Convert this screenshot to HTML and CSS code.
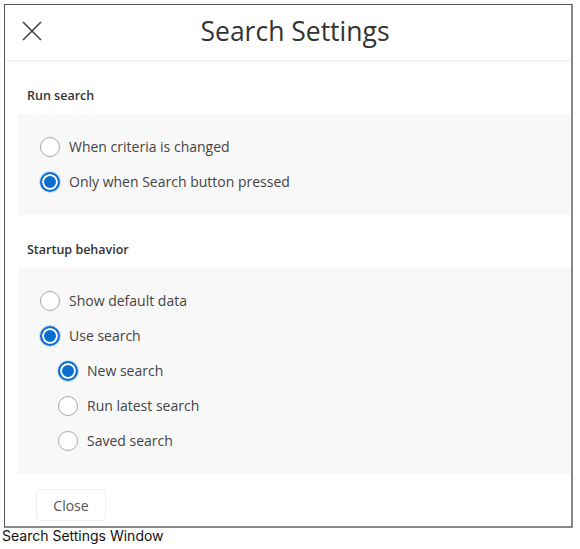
FILE: index.html
```html
<!DOCTYPE html>
<html lang="en">
<head>
    <meta charset="UTF-8">
    <title>Search Settings</title>
    <link rel="stylesheet" href="styles.css">
</head>
<body>
    <div class="window">
        <!-- Title bar -->
        <div class="window-header">
            <button class="close-icon" aria-label="Close">
                <svg width="20" height="20" viewBox="0 0 20 20">
                    <path d="M1 1 L19 19 M19 1 L1 19" stroke="#444" stroke-width="1.6" fill="none"/>
                </svg>
            </button>
            <h1 class="window-title">Search Settings</h1>
        </div>

        <div class="window-body">
            <div class="section-label">Run search</div>
            <div class="option-panel">
                <label class="radio-row">
                    <span class="radio"></span>
                    <span class="radio-text">When criteria is changed</span>
                </label>
                <label class="radio-row">
                    <span class="radio checked"></span>
                    <span class="radio-text">Only when Search button pressed</span>
                </label>
            </div>

            <div class="section-label">Startup behavior</div>
            <div class="option-panel">
                <label class="radio-row">
                    <span class="radio"></span>
                    <span class="radio-text">Show default data</span>
                </label>
                <label class="radio-row">
                    <span class="radio checked"></span>
                    <span class="radio-text">Use search</span>
                </label>
                <label class="radio-row sub">
                    <span class="radio checked"></span>
                    <span class="radio-text">New search</span>
                </label>
                <label class="radio-row sub">
                    <span class="radio"></span>
                    <span class="radio-text">Run latest search</span>
                </label>
                <label class="radio-row sub">
                    <span class="radio"></span>
                    <span class="radio-text">Saved search</span>
                </label>
            </div>

            <div class="window-footer">
                <button class="btn">Close</button>
            </div>
        </div>
    </div>
    <div class="caption">Search Settings Window</div>
</body>
</html>
```

FILE: styles.css
```css
body {
    margin: 0;
    background: #fff;
    font-family: 'Open Sans', 'Noto Sans', sans-serif;
    color: #333;
}

/* Dialog frame */
.window {
    margin: 4px 0 0 4px;
    width: 566px;
    height: 521px;
    border-left: 1px solid #555;
    border-top: 1px solid #555;
    border-right: 2px solid #888;
    border-bottom: 2px solid #888;
    background: #fff;
    overflow: hidden;
}

.window-header {
    height: 55px;
    display: flex;
    align-items: center;
    position: relative;
    border-bottom: 1px solid #eee;
    box-shadow: 0 1px 2px rgba(0, 0, 0, 0.04);
}

.close-icon {
    position: absolute;
    left: 17px;
    top: 16px;
    width: 20px;
    height: 20px;
    padding: 0;
    border: none;
    background: none;
    cursor: pointer;
}

.window-title {
    flex: 1;
    margin: -4px 0 0;
    text-align: center;
    font-size: 26.5px;
    font-weight: 400;
    color: #333;
    padding-left: 14px;
}

.window-body {
    padding-left: 13px;
}

.section-label {
    font-size: 12.5px;
    font-weight: 600;
    line-height: 18px;
    padding: 26px 0 9px 9px;
    color: #333;
}

.option-panel {
    background: #f8f8f8;
    padding: 15px 0 16px 22px;
}

.radio-row {
    display: flex;
    align-items: center;
    height: 35px;
    cursor: pointer;
}

.radio-row.sub {
    padding-left: 18px;
}

.radio {
    width: 18px;
    height: 18px;
    border-radius: 50%;
    border: 1px solid #a8a8a8;
    background: #fff;
    box-sizing: content-box;
    margin-right: 9px;
    flex-shrink: 0;
}

.radio.checked {
    width: 16px;
    height: 16px;
    border: 2px solid #0b6fd0;
    background: #0b6fd0;
    box-shadow: inset 0 0 0 2px #fff, 0 0 0 1px #cfe0f3;
}

.radio-text {
    font-size: 14px;
    color: #444;
}

.window-footer {
    padding: 15px 0 0 18px;
}

.btn {
    width: 70px;
    height: 32px;
    background: #fff;
    border: 1px solid #eee;
    border-radius: 4px;
    font-family: 'Open Sans', 'Noto Sans', sans-serif;
    font-size: 14px;
    color: #555;
    cursor: pointer;
}

.caption {
    padding-left: 2px;
    font-family: Inter, 'Liberation Sans', sans-serif;
    font-size: 14px;
    line-height: 16px;
    color: #111;
}
```
